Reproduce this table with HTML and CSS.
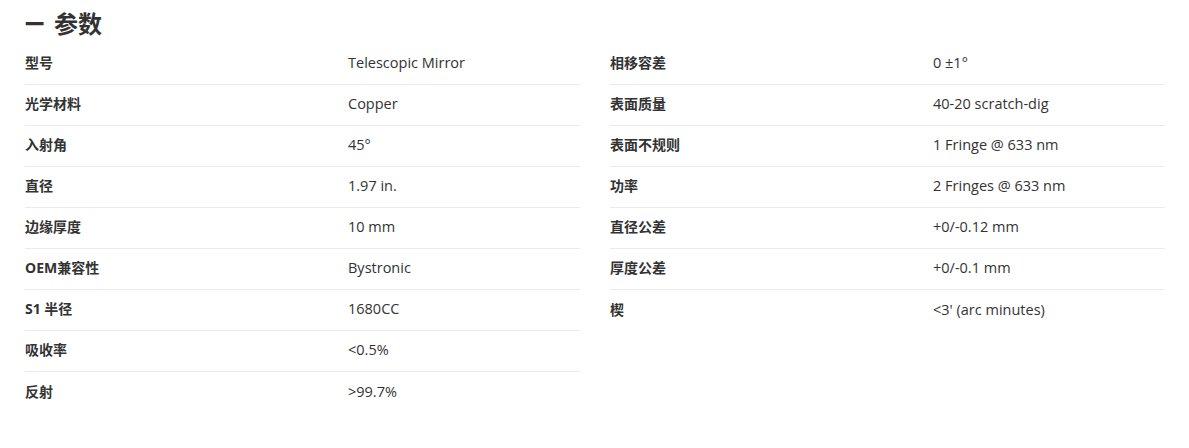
FILE: index.html
```html
<!DOCTYPE html>
<html lang="zh">
<head>
<meta charset="utf-8">
<link rel="stylesheet" href="styles.css">
</head>
<body>
<section class="specs">
  <h2 class="title"><span class="dash">一</span>参数</h2>
  <div class="cols">
    <div class="table">
      <div class="row"><div class="k">型号</div><div class="v">Telescopic Mirror</div></div>
      <div class="row"><div class="k">光学材料</div><div class="v">Copper</div></div>
      <div class="row"><div class="k">入射角</div><div class="v">45°</div></div>
      <div class="row"><div class="k">直径</div><div class="v">1.97 in.</div></div>
      <div class="row"><div class="k">边缘厚度</div><div class="v">10 mm</div></div>
      <div class="row"><div class="k">OEM兼容性</div><div class="v">Bystronic</div></div>
      <div class="row"><div class="k">S1 半径</div><div class="v">1680CC</div></div>
      <div class="row"><div class="k">吸收率</div><div class="v">&lt;0.5%</div></div>
      <div class="row"><div class="k">反射</div><div class="v">&gt;99.7%</div></div>
    </div>
    <div class="table">
      <div class="row"><div class="k">相移容差</div><div class="v">0 ±1°</div></div>
      <div class="row"><div class="k">表面质量</div><div class="v">40-20 scratch-dig</div></div>
      <div class="row"><div class="k">表面不规则</div><div class="v">1 Fringe @ 633 nm</div></div>
      <div class="row"><div class="k">功率</div><div class="v">2 Fringes @ 633 nm</div></div>
      <div class="row"><div class="k">直径公差</div><div class="v">+0/-0.12 mm</div></div>
      <div class="row"><div class="k">厚度公差</div><div class="v">+0/-0.1 mm</div></div>
      <div class="row"><div class="k">楔</div><div class="v">&lt;3' (arc minutes)</div></div>
    </div>
  </div>
</section>
</body>
</html>
```

FILE: styles.css
```css
html, body {
  margin: 0;
  padding: 0;
  background: #fff;
}
body {
  font-family: "Open Sans", "Noto Sans CJK SC", sans-serif;
  color: #333;
}
.specs {
  padding: 8px 24px 0 25px;
}
.title {
  margin: 0;
  height: 36px;
  line-height: 30px;
  font-size: 24px;
  font-weight: 700;
  color: #333;
  font-family: "Noto Sans CJK SC", sans-serif;
}
.dash {
  display: inline-block;
  transform: scaleX(0.8);
  transform-origin: left center;
  margin-right: 5px;
}
.cols {
  display: grid;
  grid-template-columns: 555px 555px;
  column-gap: 30px;
}
.row {
  display: grid;
  grid-template-columns: 323px 1fr;
  box-sizing: border-box;
  height: 41px;
  padding-bottom: 2px;
  align-items: center;
  border-bottom: 1px solid #ebebeb;
}
.row:last-child {
  border-bottom: none;
}
.k {
  font-family: "Open Sans", "Noto Sans CJK SC", sans-serif;
  font-weight: 700;
  font-size: 14px;
  line-height: 20px;
  color: #333;
}
.v {
  font-size: 14.5px;
  line-height: 20px;
  color: #333;
}
```
